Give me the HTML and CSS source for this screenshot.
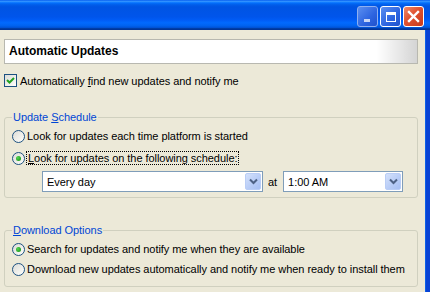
FILE: index.html
```html
<!DOCTYPE html>
<html>
<head>
    <meta charset="UTF-8">
    <title>Automatic Updates</title>
    <link rel="stylesheet" href="styles.css">
</head>
<body>
    <div class="window">
        <div class="titlebar">
            <div class="tb-buttons">
                <span class="tb-btn tb-min"><span class="min-bar"></span></span>
                <span class="tb-btn tb-max"><span class="max-box"></span></span>
                <span class="tb-btn tb-close">
                    <svg width="13" height="13" viewBox="0 0 13 13">
                        <path d="M2 2 L11 11 M11 2 L2 11" stroke="#fff" stroke-width="2.4" stroke-linecap="square"/>
                    </svg>
                </span>
            </div>
        </div>
        <div class="content">
            <div class="banner">Automatic Updates</div>

            <div class="check-row">
                <span class="checkbox">
                    <svg width="11" height="11" viewBox="0 0 11 11">
                        <path d="M2 5 L4.5 7.5 L9 3" fill="none" stroke="#21a121" stroke-width="2"/>
                    </svg>
                </span>
                <span>Automatically <u>f</u>ind new updates and notify me</span>
            </div>

            <fieldset class="group group-schedule">
                <legend>Update <u>S</u>chedule</legend>
                <div class="radio-row">
                    <span class="radio"></span>
                    <span>Look for updates each time platform is started</span>
                </div>
                <div class="radio-row">
                    <span class="radio checked"></span>
                    <span class="focus"><u>L</u>ook for updates on the following schedule:</span>
                </div>
                <div class="schedule-row">
                    <div class="combo combo-day">
                        <span class="combo-text">Every day</span>
                        <span class="combo-btn">
                            <svg width="9" height="7" viewBox="0 0 9 7">
                                <path d="M1 1.5 L4.5 5 L8 1.5" fill="none" stroke="#4d6185" stroke-width="2"/>
                            </svg>
                        </span>
                    </div>
                    <span class="at">at</span>
                    <div class="combo combo-time">
                        <span class="combo-text">1:00 AM</span>
                        <span class="combo-btn">
                            <svg width="9" height="7" viewBox="0 0 9 7">
                                <path d="M1 1.5 L4.5 5 L8 1.5" fill="none" stroke="#4d6185" stroke-width="2"/>
                            </svg>
                        </span>
                    </div>
                </div>
            </fieldset>

            <fieldset class="group group-download">
                <legend><u>D</u>ownload Options</legend>
                <div class="radio-row">
                    <span class="radio checked"></span>
                    <span>Search for updates and notify me when they are available</span>
                </div>
                <div class="radio-row">
                    <span class="radio"></span>
                    <span>Download new updates automatically and notify me when ready to install them</span>
                </div>
            </fieldset>
        </div>
    </div>
</body>
</html>
```

FILE: styles.css
```css
html, body {
    margin: 0;
    padding: 0;
}
body {
    font-family: "Liberation Sans", Arial, sans-serif;
    font-size: 11px;
    letter-spacing: -0.05px;
    color: #000;
    background: #ece9d8;
}
.window {
    width: 430px;
    height: 292px;
    display: flex;
    flex-direction: column;
    overflow: hidden;
}
.titlebar {
    height: 30px;
    flex: none;
    background: linear-gradient(to bottom, #0058ee 0%, #3593ff 4%, #288eff 6%, #127dff 8%, #036ffc 10%, #0262ee 14%, #0057e5 20%, #0054e3 24%, #0055eb 56%, #005bf5 66%, #026afe 76%, #0062ef 86%, #0052d6 92%, #0040ab 94%, #003092 100%);
    display: flex;
    justify-content: flex-end;
    padding: 6px 6px 0 0;
    box-sizing: border-box;
}
.tb-buttons {
    display: flex;
    gap: 2px;
}
.tb-btn {
    width: 21px;
    height: 21px;
    box-sizing: border-box;
    border: 1px solid #fff;
    border-radius: 3px;
    position: relative;
    display: flex;
    align-items: center;
    justify-content: center;
}
.tb-min {
    background: linear-gradient(135deg, #5b8ff0 0%, #2d64e0 60%, #1f52cc 100%);
    border-color: #8fb0f0;
}
.min-bar {
    position: absolute;
    left: 6px;
    top: 12px;
    width: 6px;
    height: 3px;
    background: #c8d6f6;
}
.tb-max {
    background: linear-gradient(135deg, #5b8ff0 0%, #2d64e0 60%, #1f52cc 100%);
}
.max-box {
    width: 10px;
    height: 10px;
    box-sizing: border-box;
    border: 1px solid #fff;
    border-top-width: 3px;
}
.tb-close {
    background: linear-gradient(135deg, #ef8a6a 0%, #e0512f 45%, #c83a1c 100%);
}
.content {
    flex: 1;
    display: flex;
    flex-direction: column;
    padding: 9px 8px 0 4px;
    border-right: 4px solid #0842d4;
    box-shadow: inset -1px 0 0 #0a5fe8;
}
.banner {
    height: 25px;
    box-sizing: border-box;
    border: 1px solid #b8b8b0;
    background:
        linear-gradient(to right, #fff 372px, rgba(255,255,255,0.35) 412px),
        radial-gradient(circle, #bcbcbc 0.7px, #fff 1px) 0 0 / 2px 2px;
    font-weight: bold;
    font-size: 12px;
    line-height: 23px;
    padding-left: 4px;
    letter-spacing: 0;
}
.check-row {
    display: flex;
    align-items: center;
    gap: 3px;
    height: 17px;
    margin-top: 8px;
}
.checkbox {
    width: 13px;
    height: 13px;
    box-sizing: border-box;
    border: 1px solid #1c5180;
    background: linear-gradient(135deg, #dcdcd7 0%, #f4f4f0 70%, #fff 100%);
    display: flex;
    align-items: center;
    justify-content: center;
}
.group {
    margin: 0;
    border: 1px solid #d0d0bf;
    border-radius: 3px;
    padding: 2px 7px 5px 7px;
}
.group legend {
    color: #0046d5;
    padding: 0 1px;
    line-height: 14px;
}
.group-schedule {
    margin-top: 21px;
}
.group-schedule .radio-row {
    margin-bottom: 2px;
}
.group-download {
    margin-top: 25px;
    padding-top: 2px;
    padding-bottom: 7px;
}
.radio-row {
    display: flex;
    align-items: center;
    gap: 2px;
    height: 20px;
}
.radio {
    width: 13px;
    height: 13px;
    box-sizing: border-box;
    border: 1px solid #1c5180;
    border-radius: 50%;
    background: linear-gradient(135deg, #dcdcd7 0%, #f4f4f0 70%, #fff 100%);
    display: flex;
    align-items: center;
    justify-content: center;
}
.radio.checked::after {
    content: "";
    width: 5px;
    height: 5px;
    border-radius: 50%;
    background: radial-gradient(circle at 35% 35%, #55d551, #21a121 70%);
}
.focus {
    outline: 1px dotted #000;
    padding: 0 1px;
}
.schedule-row {
    display: flex;
    align-items: center;
    margin-top: 3px;
    padding-left: 30px;
}
.combo {
    height: 21px;
    box-sizing: border-box;
    border: 1px solid #7f9db9;
    background: #fff;
    display: flex;
    align-items: center;
    padding: 1px;
}
.combo-day {
    width: 221px;
}
.combo-time {
    width: 120px;
}
.combo-text {
    flex: 1;
    padding-left: 3px;
}
.combo-btn {
    width: 16px;
    height: 17px;
    border-radius: 2px;
    border: 1px solid #b9cdf6;
    box-sizing: border-box;
    background: linear-gradient(135deg, #d4e1fb 0%, #b6cbf6 60%, #a7bff3 100%);
    display: flex;
    align-items: center;
    justify-content: center;
}
.at {
    margin: 0 6px 0 5px;
}
```
